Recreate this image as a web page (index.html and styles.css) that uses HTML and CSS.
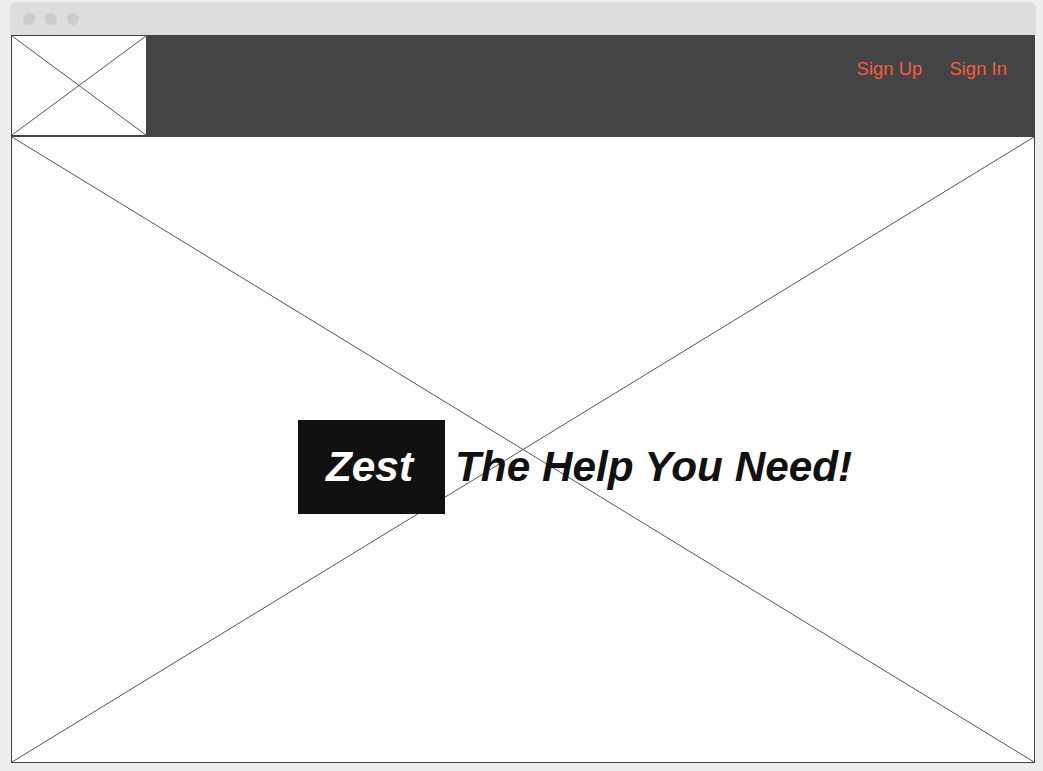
FILE: index.html
```html
<!DOCTYPE html>
<html lang="en">
<head>
<meta charset="UTF-8">
<meta name="viewport" content="width=device-width, initial-scale=1.0">
<title>Zest</title>
<link rel="stylesheet" href="styles.css">
</head>
<body>
<div class="window">
  <div class="titlebar">
    <span class="dot"></span>
    <span class="dot"></span>
    <span class="dot"></span>
  </div>
  <div class="page">
    <header class="header">
      <div class="logo placeholder">
        <svg class="cross" viewBox="0 0 100 100" preserveAspectRatio="none">
          <line x1="0" y1="0" x2="100" y2="100" vector-effect="non-scaling-stroke"/>
          <line x1="100" y1="0" x2="0" y2="100" vector-effect="non-scaling-stroke"/>
        </svg>
      </div>
      <nav class="nav">
        <a href="#">Sign Up</a>
        <a href="#">Sign In</a>
      </nav>
    </header>
    <main class="hero placeholder">
      <svg class="cross" viewBox="0 0 100 100" preserveAspectRatio="none">
        <line x1="0" y1="0" x2="100" y2="100" vector-effect="non-scaling-stroke"/>
        <line x1="100" y1="0" x2="0" y2="100" vector-effect="non-scaling-stroke"/>
      </svg>
      <div class="hero-content">
        <div class="brand">Zest</div>
        <h1 class="tagline">The Help You Need!</h1>
      </div>
    </main>
  </div>
</div>
</body>
</html>
```

FILE: styles.css
```css
/* Page and browser frame */
body {
  margin: 0;
  background-color: #eeeeee;
  font-family: "Liberation Sans", Arial, sans-serif;
}
.window {
  width: 1026px;
  margin: 2px 0 0 10px;
}
.titlebar {
  height: 33px;
  background-color: #dddddd;
  border-radius: 6px 6px 0 0;
  display: flex;
  align-items: center;
  gap: 10px;
  padding-left: 13px;
  box-sizing: border-box;
}
.dot {
  width: 12px;
  height: 12px;
  border-radius: 50%;
  background-color: #cccccc;
}
.page {
  margin-left: 1px;
  width: 1024px;
}

/* Wireframe image placeholders */
.placeholder {
  position: relative;
  background-color: #fff;
  border: 1px solid #444;
  box-sizing: border-box;
}
.cross {
  position: absolute;
  top: 0;
  left: 0;
  width: 100%;
  height: 100%;
}
.cross line {
  stroke: #555;
  stroke-width: 1;
}

/* Header */
.header {
  height: 101px;
  background-color: #444444;
  display: flex;
  justify-content: space-between;
}
.logo {
  width: 136px;
  height: 101px;
}
.nav {
  display: flex;
  gap: 27px;
  padding: 23px 28px 0 0;
}
.nav a {
  color: #f2603f;
  text-decoration: none;
  font-size: 18.5px;
  height: 22px;
}

/* Hero */
.hero {
  height: 627px;
  padding: 283px 0 0 286px;
}
.hero-content {
  position: relative;
  display: flex;
  align-items: center;
  gap: 10px;
}
.brand {
  height: 94px;
  padding: 0 32px 0 28px;
  display: flex;
  align-items: center;
  background-color: #111111;
  color: #fff;
  font-size: 42.3px;
  font-weight: bold;
  font-style: italic;
}
.tagline {
  margin: 0;
  color: #111111;
  font-size: 42.3px;
  font-weight: bold;
  font-style: italic;
}
```
